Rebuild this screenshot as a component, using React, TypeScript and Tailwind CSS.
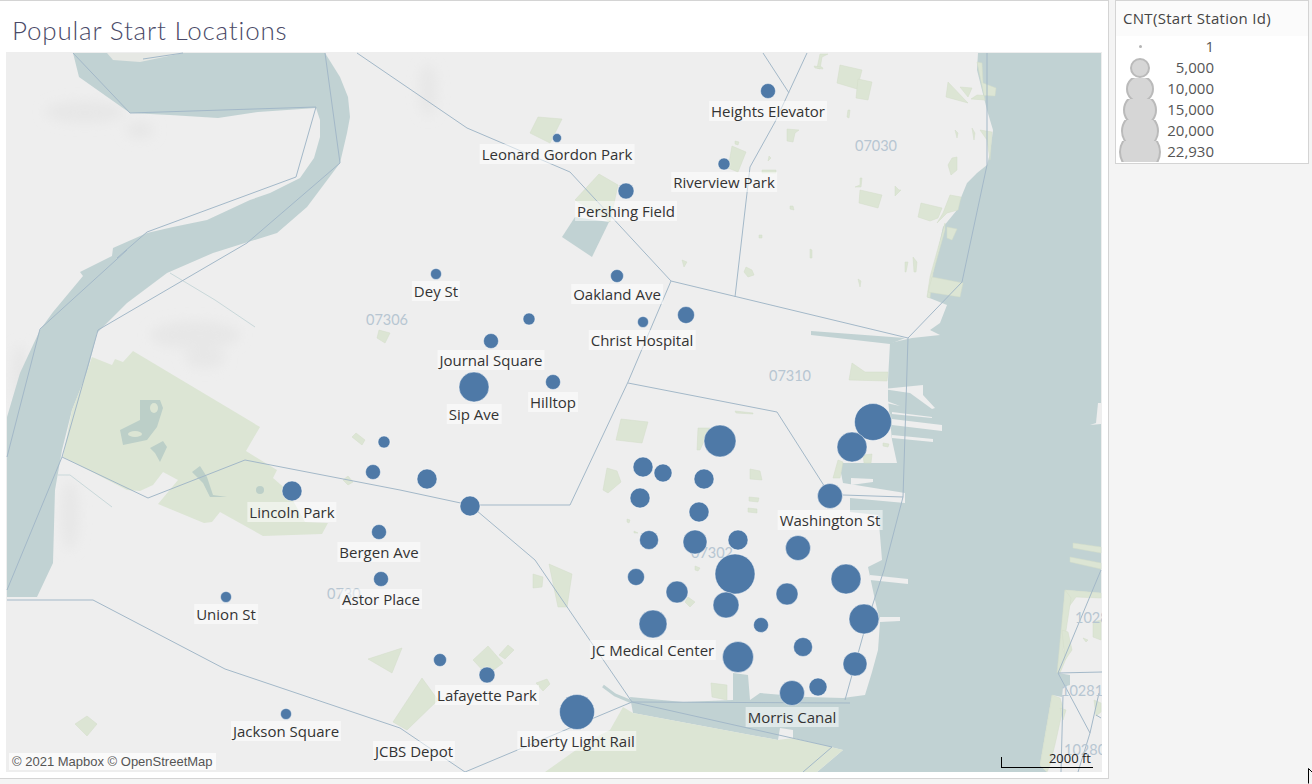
import React from 'react';

const WATER = '#c1d2d3';
const LAND = '#eeeeee';
const PARK = '#dce5d4';
const LINE = '#a3b8c8';

const marks: [number, number, number][] = [
  [768, 91, 7.5], [557, 138, 4.5], [724, 164, 6], [626, 191, 8], [436, 274, 5.5], [617, 276, 6.5],
  [529, 319, 6], [643, 322, 5.5], [686, 315, 8.5], [491, 341, 7.5], [474, 387, 15], [553, 382, 7.5],
  [384, 442, 6], [373, 472, 7.5], [427, 479, 10], [292, 491, 10], [470, 506, 10], [379, 532, 7.5],
  [381, 579, 7.5], [226, 597, 5.5], [440, 660, 6.5], [487, 675, 8], [286, 714, 5.5], [577, 712, 17.5],
  [653, 624, 14], [720, 441, 16], [873, 422, 18.5], [852, 447, 15], [830, 496, 12.5], [643, 467, 10],
  [663, 473, 9], [704, 479, 10], [640, 498, 10], [699, 512, 10], [649, 540, 9.5], [695, 542, 12],
  [738, 540, 10], [798, 548, 12.5], [735, 574, 20], [636, 577, 8.5], [846, 579, 15], [677, 592, 11],
  [726, 605, 13], [787, 594, 11], [864, 619, 15], [761, 625, 7.5], [803, 647, 9.5], [738, 657, 15.5],
  [855, 664, 12], [792, 693, 12.5], [818, 687, 9],
];

const labels: [string, number, number][] = [
  ['Heights Elevator', 768, 111], ['Leonard Gordon Park', 557, 154], ['Riverview Park', 724, 182],
  ['Pershing Field', 626, 211], ['Dey St', 436, 291], ['Oakland Ave', 617, 294],
  ['Christ Hospital', 642, 340], ['Journal Square', 491, 360], ['Sip Ave', 474, 414],
  ['Hilltop', 553, 402], ['Lincoln Park', 292, 512], ['Washington St', 830, 520],
  ['Bergen Ave', 379, 552], ['Astor Place', 381, 599], ['Union St', 226, 614],
  ['JC Medical Center', 653, 650], ['Lafayette Park', 487, 695], ['Jackson Square', 286, 731],
  ['JCBS Depot', 414, 751], ['Liberty Light Rail', 577, 741], ['Morris Canal', 792, 717],
];

const parks: string[] = [
  // hoboken
  '840,65 862,70 857,89 837,83', '858,79 872,82 868,100 856,98', '948,82 968,103 946,97', '960,87 972,88 968,97',
  '977,62 982,63 983,83 996,88 995,96 977,95 971,99 985,100', '860,190 882,195 878,208 859,203',
  '921,203 942,208 938,218 930,221 918,217', '950,195 961,197 958,210 947,213 937,223 943,213',
  '945,223 930,277 927,297 930,298 933,273 945,230', '932,277 963,283 960,297 928,292', '947,227 957,229 952,240 947,238',
  '787,129 799,130 795,133 793,142 787,141', '817,68 820,54 828,54 822,57 820,69', '814,66 822,67 823,69 815,68',
  '848,110 850,110 849,118 847,117', '769,156 771,158 768,161', '762,170 776,170 776,173 762,173',
  '860,178 862,178 861,187 855,187 860,185', '790,206 793,206 794,210 790,209', '759,235 762,235 762,238 759,238',
  '810,249 812,250 812,258 810,258', '746,267 752,270 754,275 748,277 744,272', '905,262 908,262 906,272 905,272',
  '913,257 917,262 916,272 914,272', '858,279 861,281 860,287', '952,158 957,157 957,170 951,175 948,165',
  '955,130 958,133 957,138', '972,128 975,133 974,140', '980,130 992,132 990,160 987,140',
  '732,146 746,152 738,172 728,168', '735,141 739,142 738,145 735,144', '899,190 901,190 895,196 895,186',
  // jersey city heights
  '599,174 618,185 610,222 575,200', '538,117 562,119 550,143 530,133', '379,330 390,333 385,343 377,338',
  '682,260 687,262 684,267', '352,437 356,433 365,440 362,445', '343,480 348,476 353,482 348,485',
  // downtown
  '621,419 648,422 642,443 616,440', '698,428 710,428 700,450 697,450', '607,468 617,471 621,482 608,493 603,490',
  '750,469 760,471 762,480 750,479', '749,497 759,498 758,502 749,501', '748,508 757,509 757,513 748,512',
  '735,411 753,413 753,414 736,413', '852,363 865,372 888,372 887,381 849,380', '863,455 872,454 871,463 864,463',
  '838,460 843,462 840,478 833,478', '883,443 889,444 888,447 883,446', '627,519 630,520 629,523 627,522',
  '634,531 638,533 634,533',
  // south
  '549,564 572,574 567,607 558,607', '533,574 543,577 542,587 533,588', '368,659 402,648 392,673',
  '473,660 488,646 503,663 487,675', '499,655 508,645 514,650 505,659', '422,678 438,700 407,730 393,722',
  '536,683 547,679 550,684 543,691', '711,683 727,685 727,700 712,697', '688,597 695,602 690,607 685,602',
  '695,566 700,568 698,571 695,570', '75,724 87,716 97,724 87,736',
  // manhattan
  '1065,590 1101,593 1101,598 1076,597 1068,608', '1065,590 1071,598 1063,650 1067,656 1060,673 1057,673',
  '1093,622 1101,620 1101,640 1093,637', '1062,630 1068,632 1072,650 1065,660', '1083,638 1088,640 1086,642',
  '1052,695 1060,698 1063,708 1056,740 1050,765 1047,772 1040,765', '1060,708 1066,710 1063,720',
  '1073,543 1101,547 1101,553 1073,548', '1070,557 1101,563 1101,569 1070,562', '1094,700 1101,703 1101,712 1096,716',
];

const piers: string[] = [
  '883,389 923,385 923,395 935,408 932,409 910,393 903,392', '884,400 900,406 886,403',
  '892,412 932,417 932,418 892,414', '892,419 942,425 942,431 892,425', '892,435 933,439 933,442 892,438',
  '851,478 873,479 873,482 851,485', '870,575 908,579 908,584 870,580', '880,617 900,617 900,621 880,622',
  '1090,425 1101,424 1101,403 1098,403 1096,423',
];

const boundaries: string[] = [
  '73,53 130,113 316,107 296,177 147,232 117,258', '127,250 40,329 7,457', '325,53 340,163 247,243 98,330 62,457 7,590',
  '62,457 148,498 245,460 400,490 470,505 570,505 628,382 671,281', '357,53 467,128 570,172 671,281 908,338',
  '143,59 183,53', '7,600 93,600 225,669 400,728 465,772 632,702', '470,505 535,560 632,702 832,747 803,772', '632,702 850,703',
  '628,383 777,412 830,495', '843,495 903,497', '763,53 789,93', '807,53 775,122 750,167 735,297',
  '908,338 962,282 987,165 987,53', '908,338 903,497 884,570 866,625 845,700',
  '1101,570 1058,673 1102,672', '1058,673 1090,733', '1063,695 1061,772', '1099,693 1090,733 1078,772', '1096,715 1101,718',
];

const zips: [string, number, number][] = [
  ['07030', 876, 151], ['07306', 387, 325], ['07310', 790, 381], ['07302', 712, 558], ['0730', 327, 599],
  ['1028', 1075, 623], ['10281', 1061, 696], ['10280', 1064, 755],
];

const MapView = () => (
  <div className="relative h-[720px] w-[1096px] overflow-hidden bg-[#eeeeee] font-['Open_Sans',sans-serif]">
    <svg className="absolute inset-0 h-full w-full" viewBox="6 52 1096 720">
      <defs>
        <filter id="soft" x="-30%" y="-30%" width="160%" height="160%">
          <feGaussianBlur stdDeviation="6" />
        </filter>
      </defs>

      <rect x="6" y="52" width="1096" height="720" fill={LAND} />

      {/* hillshade smudges */}
      <g fill="#e7e7e7" filter="url(#soft)">
        <ellipse cx="85" cy="112" rx="40" ry="11" />
        <ellipse cx="140" cy="130" rx="14" ry="9" />
        <ellipse cx="195" cy="335" rx="45" ry="14" />
        <ellipse cx="205" cy="358" rx="20" ry="10" />
        <ellipse cx="428" cy="90" rx="9" ry="26" />
        <ellipse cx="70" cy="515" rx="9" ry="35" />
        <ellipse cx="20" cy="375" rx="8" ry="30" />
      </g>

      {/* river */}
      <polygon
        fill={WATER}
        points="73,53 79,77 130,113 170,115 218,118 258,112 316,108 320,120 320,137 314,158 300,178 270,193 250,200 207,220 173,227 147,233 113,248 112,256 80,272 83,276 53,312 40,330 20,373 7,417 7,597 37,597 53,563 55,490 62,450 72,410 87,373 97,333 127,303 167,273 213,253 277,233 307,207 340,163 347,133 350,117 348,97 340,77 325,53"
      />
      <polygon fill="#e6e8e4" points="107,53 113,60 140,62 183,53" />
      <polyline points="170,273 215,300 255,327" fill="none" stroke="#c9d8da" strokeWidth="1" />
      <polyline points="58,475 70,475 112,507" fill="none" stroke="#c9d8da" strokeWidth="1" />

      {/* harbour */}
      <polygon
        fill={WATER}
        points="978,53 977,70 987,110 993,130 990,153 987,165 977,173 967,183 960,200 957,210 943,227 933,273 927,297 947,305 940,323 930,330 940,335 912,338 890,343 888,380 888,400 892,440 897,463 842,463 841,473 843,483 905,493 905,503 850,498 850,512 878,515 880,535 882,560 868,567 875,600 880,622 878,650 872,672 865,695 843,698 807,697 760,693 750,700 748,675 733,673 733,700 683,702 630,697 633,713 778,740 780,728 793,730 793,738 843,750 817,772 1047,772 1040,765 1052,695 1062,697 1063,687 1070,685 1070,675 1058,673 1065,590 1101,593 1101,53"
      />
      <polygon fill={WATER} points="811,331 905,338 890,344 811,335" />
      <polyline points="603,686 615,695 632,702" fill="none" stroke={WATER} strokeWidth="3" />
      <polygon fill={WATER} points="575,217 609,222 592,257 562,237" />
      <g fill={LAND}>
        {piers.map((p, i) => <polygon key={i} points={p} />)}
      </g>

      {/* parks */}
      <g fill={PARK}>
        <polygon points="92,357 112,365 115,359 123,362 133,351 260,427 246,451 277,470 273,478 287,490 305,522 328,523 322,534 263,536 220,512 212,522 204,523 158,504 178,480 163,472 153,485 140,491 127,490 63,457 72,410 85,377" />
        <polygon points="545,772 590,740 610,730 623,707 633,713 778,740 793,738 843,750 817,772" />
        {parks.map((p, i) => <polygon key={i} points={p} stroke="#d2ddc9" strokeWidth="0.5" />)}
      </g>

      {/* lincoln park ponds */}
      <g fill="#bccfc8">
        <polygon points="140,400 160,400 163,408 157,427 147,440 123,445 120,430 140,420" />
        <polygon points="150,448 163,441 167,447 160,462 155,453" />
        <polygon points="192,472 200,466 207,477 213,495 227,497 210,497 203,483" />
        <circle cx="260" cy="490" r="4" />
      </g>
      <g fill={PARK}>
        <ellipse cx="135" cy="434" rx="7" ry="3" />
        <ellipse cx="154" cy="408" rx="4" ry="5" />
      </g>

      <g fill="none" stroke={LINE} strokeWidth="1">
        {boundaries.map((p, i) => <polyline key={i} points={p} />)}
      </g>

      <g fill="#b7c6d2" fontSize="14.5" fontFamily="Lato, sans-serif">
        {zips.map(([t, x, y]) => <text key={t} x={x} y={y} textAnchor={t.length === 5 && x < 1000 ? 'middle' : 'start'}>{t}</text>)}
      </g>

      <g fill="#4e79a7" stroke="#ffffff" strokeOpacity="0.45" strokeWidth="1">
        {marks.map(([x, y, r], i) => <circle key={i} cx={x} cy={y} r={r} />)}
      </g>
    </svg>

    {labels.map(([text, x, y]) => (
      <div
        key={text}
        className="absolute -translate-x-1/2 -translate-y-1/2 whitespace-nowrap bg-white/50 px-[2px] text-[15px] leading-[20px] text-[#333333]"
        style={{ left: x - 6, top: y - 52 }}
      >
        {text}
      </div>
    ))}

    <div className="absolute bottom-[2px] left-[3px] bg-white/70 px-[3px] font-['Liberation_Sans',sans-serif] text-[13px] leading-[17px] text-[#555555]">
      © 2021 Mapbox © OpenStreetMap
    </div>

    <div className="absolute bottom-[4px] right-[9px] h-[11px] w-[92px] border-b-[1.5px] border-l-[1.5px] border-black">
      <span className="absolute bottom-[1px] right-[2px] whitespace-nowrap text-[13px] leading-[16px] text-[#222222]">2000 ft</span>
    </div>
  </div>
);

const legendRows: [string, string][] = [
  ['1', 'h-[3px] w-[3px] bg-[#b4b4b4]'],
  ['5,000', 'h-[20px] w-[20px]'],
  ['10,000', 'h-[28px] w-[28px]'],
  ['15,000', 'h-[34px] w-[34px]'],
  ['20,000', 'h-[38px] w-[38px]'],
  ['22,930', 'h-[42px] w-[42px]'],
];

const Legend = () => (
  <div className="h-[164px] w-[194px] border border-[#d4d4d4] bg-white font-['Open_Sans',sans-serif]">
    <div className="h-[35px] bg-[#fbfbfb] pl-[7px] pt-[7px] text-[15px] leading-[20px] tracking-[0.3px] text-[#444444]">CNT(Start Station Id)</div>
    {legendRows.map(([value, size]) => (
      <div key={value} className="flex h-[21px] items-center overflow-hidden">
        <div className="flex w-[48px] shrink-0 items-center justify-center">
          <div className={`shrink-0 rounded-full ${value === '1' ? size : `${size} border-2 border-[#bababa] bg-[#d6d6d6]`}`} />
        </div>
        <div className="w-[50px] text-right text-[15px] leading-[21px] text-[#555555]">{value}</div>
      </div>
    ))}
  </div>
);

export default function App() {
  return (
    <div className="relative flex h-[784px] w-[1312px] items-start overflow-hidden bg-[#f4f4f4]">
      <div className="h-[779px] w-[1109px] shrink-0 border-b border-r border-t border-[#d4d4d4] bg-white pl-[6px]">
        <div className="h-[51px] pl-[6px] pt-[11px] font-['Lato',sans-serif] text-[26px] font-light leading-[36px] tracking-[0.8px] text-[#4a4a68]">
          Popular Start Locations
        </div>
        <MapView />
      </div>
      <div className="ml-[6px]">
        <Legend />
      </div>
      <svg className="absolute bottom-0 right-0 h-[16px] w-[4px]" viewBox="0 0 4 16">
        <path d="M0.5 0.5V15.5M0.5 0.5L4 4" fill="#ffffff" stroke="#000000" strokeWidth="1" />
      </svg>
    </div>
  );
}
